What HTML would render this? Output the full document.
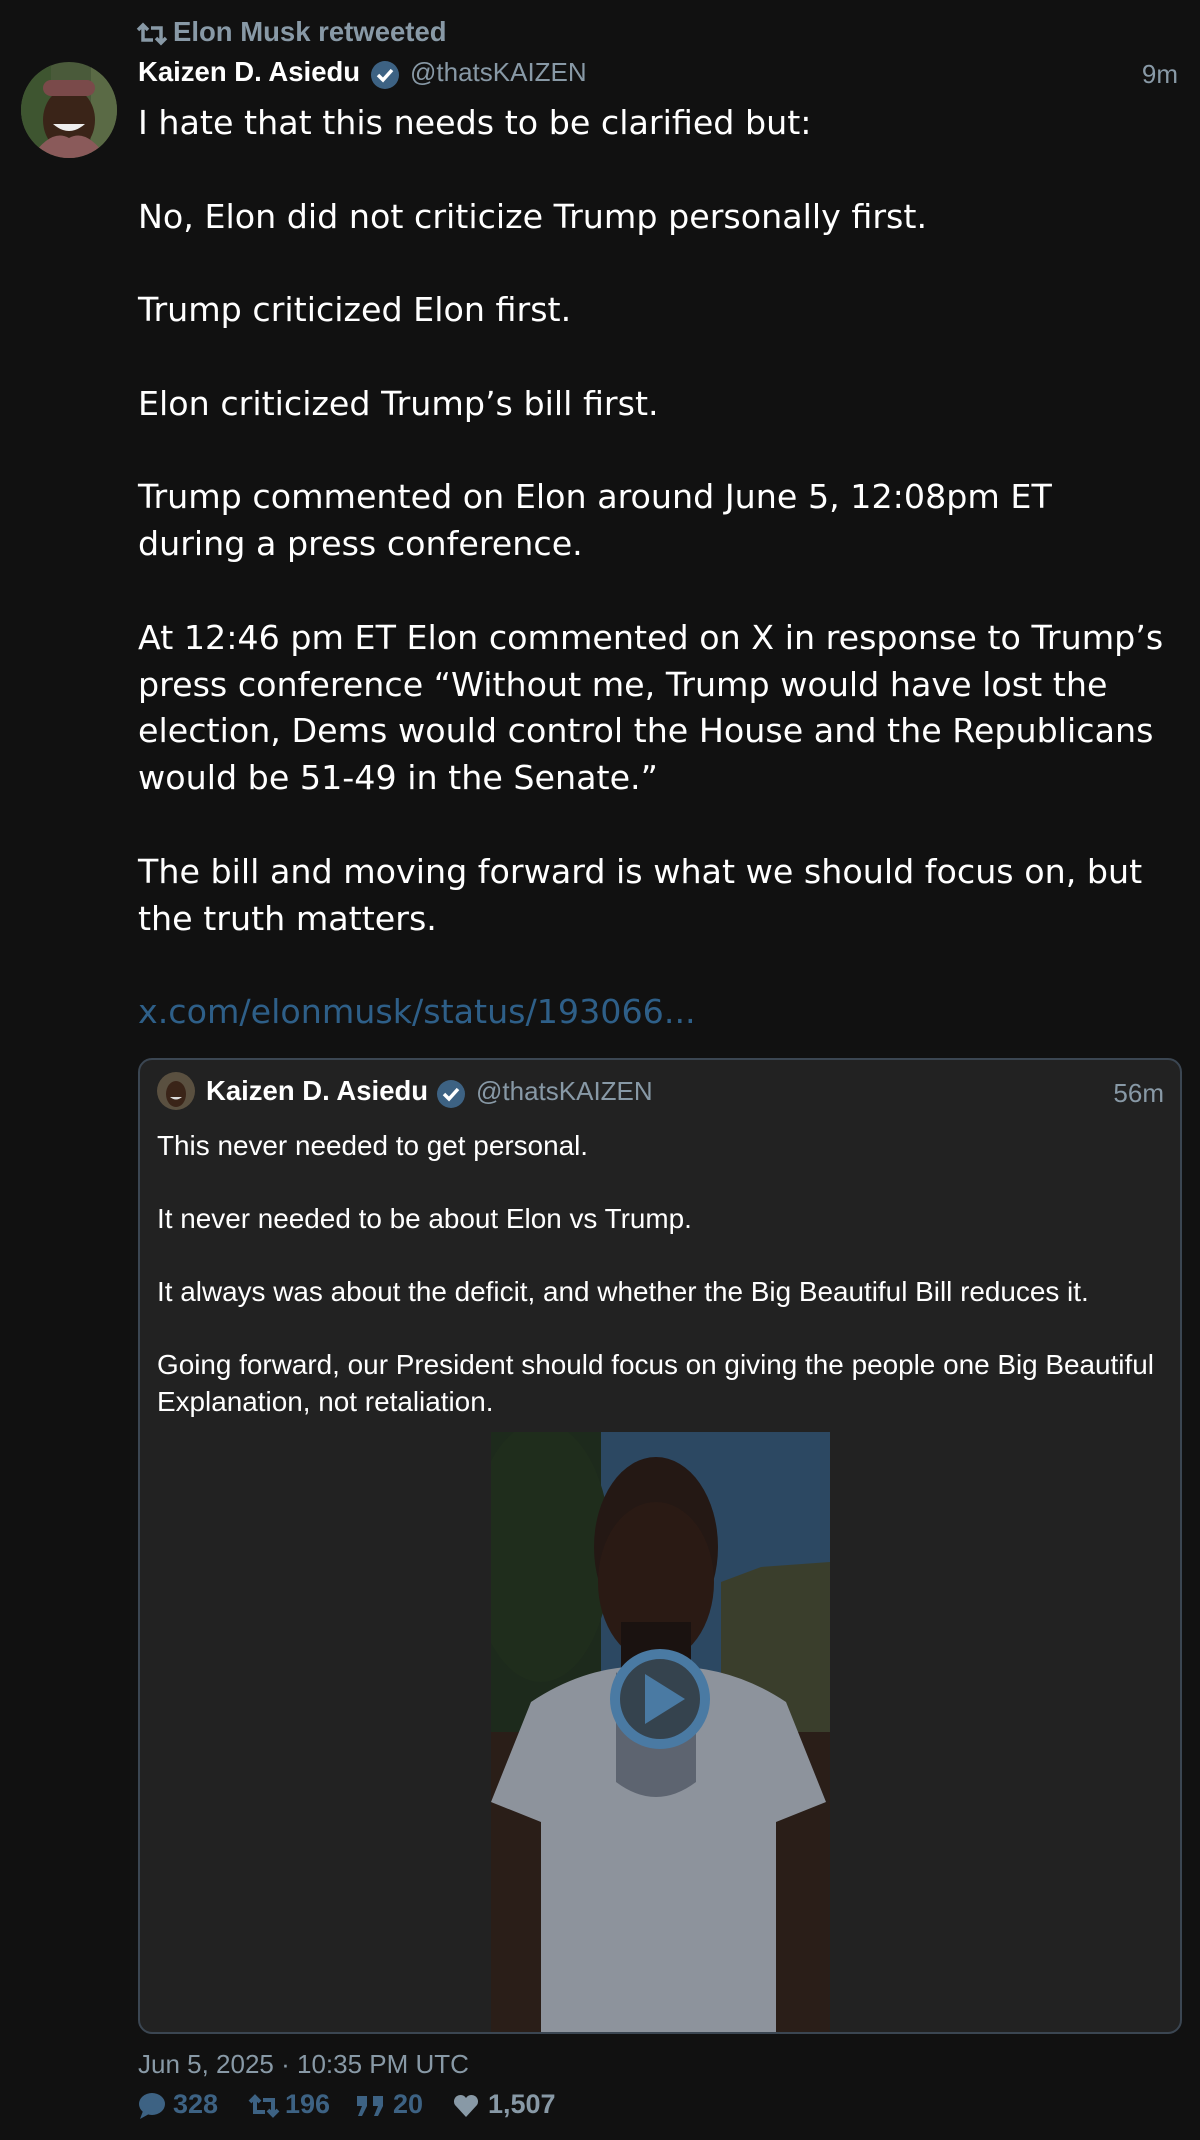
<!DOCTYPE html>
<html><head><meta charset="utf-8"><style>
*{margin:0;padding:0;box-sizing:border-box}
body{width:1200px;height:2140px;background:#111111;font-family:"Liberation Sans",sans-serif;position:relative;overflow:hidden;color:#fff}
.abs{position:absolute;white-space:nowrap}
.gray{color:#8899a6}
.body{position:absolute;left:138px;top:100px;font-size:33.3px;line-height:46.8px;color:#fff;font-family:"DejaVu Sans",sans-serif;white-space:nowrap}
.q{position:absolute;left:138px;top:1058px;width:1044px;height:976px;background:#222222;border:2px solid #3b4652;border-radius:14px;overflow:hidden}
.qt{position:absolute;left:17px;top:68px;font-size:27.9px;line-height:36.5px;white-space:nowrap;color:#fff}
</style></head><body>
<svg class="abs" style="left:136px;top:22px" width="32" height="24" viewBox="0 0 32 24"><path d="M2 8l5-5 5 5M7 4v14h10M30 16l-5 5-5-5M25 20V6H15" fill="none" stroke="#8899a6" stroke-width="3.5"/></svg>
<div class="abs gray" style="left:173px;top:16px;font-size:27.5px;font-weight:bold">Elon Musk retweeted</div>

<svg class="abs" style="left:21px;top:62px" width="96" height="96" viewBox="0 0 96 96"><defs><clipPath id="c"><circle cx="48" cy="48" r="48"/></clipPath></defs><g clip-path="url(#c)"><rect width="96" height="96" fill="#4a5a3a"/><rect x="0" y="0" width="30" height="96" fill="#3e5530"/><rect x="70" y="0" width="26" height="96" fill="#5a6a45"/><ellipse cx="48" cy="58" rx="26" ry="32" fill="#3a2418"/><rect x="22" y="18" width="52" height="16" rx="8" fill="#7a4a4a"/><path d="M32 62q16 14 32 0" fill="#eee"/><path d="M10 96q20-30 38-20 18-10 38 20z" fill="#8a5a5a"/></g></svg>

<div class="abs" style="left:138px;top:56px;font-size:27.5px;font-weight:bold">Kaizen D. Asiedu</div>
<svg class="abs" style="left:370px;top:60px" width="30" height="30" viewBox="0 0 30 30"><circle cx="15" cy="15" r="14" fill="#3d6283"/><path d="M8 15l5 5 9-10" fill="none" stroke="#fff" stroke-width="3.5"/></svg>
<div class="abs gray" style="left:410px;top:57px;font-size:26px">@thatsKAIZEN</div>
<div class="abs gray" style="right:22px;top:59px;font-size:26px">9m</div>

<div class="body">I hate that this needs to be clarified but:<br><br>No, Elon did not criticize Trump personally first.<br><br>Trump criticized Elon first.<br><br>Elon criticized Trump’s bill first.<br><br>Trump commented on Elon around June 5, 12:08pm ET<br>during a press conference.<br><br>At 12:46 pm ET Elon commented on X in response to Trump’s<br>press conference “Without me, Trump would have lost the<br>election, Dems would control the House and the Republicans<br>would be 51-49 in the Senate.”<br><br>The bill and moving forward is what we should focus on, but<br>the truth matters.<br><br><span style="color:#2e5f88">x.com/elonmusk/status/193066...</span></div>

<div class="q">
<svg class="abs" style="left:17px;top:12px" width="38" height="38" viewBox="0 0 38 38"><circle cx="19" cy="19" r="19" fill="#5a5040"/><ellipse cx="19" cy="22" rx="10" ry="13" fill="#3a2418"/><path d="M13 25q6 5 12 0" fill="#ddd"/></svg>
<div class="abs" style="left:66px;top:15px;font-size:27.5px;font-weight:bold">Kaizen D. Asiedu</div>
<svg class="abs" style="left:296px;top:19px" width="30" height="30" viewBox="0 0 30 30"><circle cx="15" cy="15" r="14" fill="#3d6283"/><path d="M8 15l5 5 9-10" fill="none" stroke="#fff" stroke-width="3.5"/></svg>
<div class="abs gray" style="left:336px;top:16px;font-size:26px">@thatsKAIZEN</div>
<div class="abs gray" style="right:16px;top:18px;font-size:26px">56m</div>
<div class="qt">This never needed to get personal.<br><br>It never needed to be about Elon vs Trump.<br><br>It always was about the deficit, and whether the Big Beautiful Bill reduces it.<br><br>Going forward, our President should focus on giving the people one Big Beautiful<br>Explanation, not retaliation.</div>
<svg class="abs" style="left:351px;top:372px" width="339" height="604" viewBox="0 0 339 604">
<rect width="339" height="604" fill="#2c4862"/>
<path d="M0 0h110v300H0z" fill="#1d2a1c"/>
<ellipse cx="50" cy="120" rx="70" ry="130" fill="#1f2d1c"/>
<path d="M230 150l40-15 69-5v200H230z" fill="#3a3e2c"/>
<ellipse cx="165" cy="115" rx="62" ry="90" fill="#241814"/>
<ellipse cx="165" cy="150" rx="58" ry="80" fill="#2a1a14"/>
<rect x="130" y="190" width="70" height="60" fill="#1a1210"/>
<path d="M0 300h339v304H0z" fill="#2a1e18"/>
<path d="M40 270q60-40 125-35 70-5 130 35l40 100-50 20v214H50V390L0 370z" fill="#8d939c"/>
<path d="M125 240q40 60 80 0v110q-40 30-80 0z" fill="#5d6470"/>
<circle cx="169" cy="267" r="45" fill="#35434e" stroke="#4a7aa3" stroke-width="10"/>
<path d="M154 242v50l40-25z" fill="#4a7aa3"/>
</svg>
</div>

<div class="abs gray" style="left:138px;top:2049px;font-size:26px">Jun 5, 2025 · 10:35 PM UTC</div>
<svg class="abs" style="left:137px;top:2091px" width="30" height="30" viewBox="0 0 30 30"><ellipse cx="15" cy="13" rx="13" ry="11" fill="#3d6283"/><path d="M6 20l-3 8 9-5z" fill="#3d6283"/></svg>
<div class="abs" style="left:173px;top:2089px;font-size:27px;font-weight:bold;color:#3d6283">328</div>
<svg class="abs" style="left:248px;top:2094px" width="32" height="24" viewBox="0 0 32 24"><path d="M2 8l5-5 5 5M7 4v14h10M30 16l-5 5-5-5M25 20V6H15" fill="none" stroke="#3d6283" stroke-width="4"/></svg>
<div class="abs" style="left:285px;top:2089px;font-size:27px;font-weight:bold;color:#3d6283">196</div>
<svg class="abs" style="left:356px;top:2094px" width="30" height="24" viewBox="0 0 30 24"><path d="M1 2h10v10l-5 10H2l4-10H1zM17 2h10v10l-5 10h-4l4-10h-5z" fill="#3d6283"/></svg>
<div class="abs" style="left:393px;top:2089px;font-size:27px;font-weight:bold;color:#3d6283">20</div>
<svg class="abs" style="left:453px;top:2094px" width="26" height="24" viewBox="0 0 26 24"><path d="M13 23L2 11A6 6 0 0 1 13 4a6 6 0 0 1 11 7z" fill="#8899a6"/></svg>
<div class="abs gray" style="left:488px;top:2089px;font-size:27px;font-weight:bold">1,507</div>
</body></html>
